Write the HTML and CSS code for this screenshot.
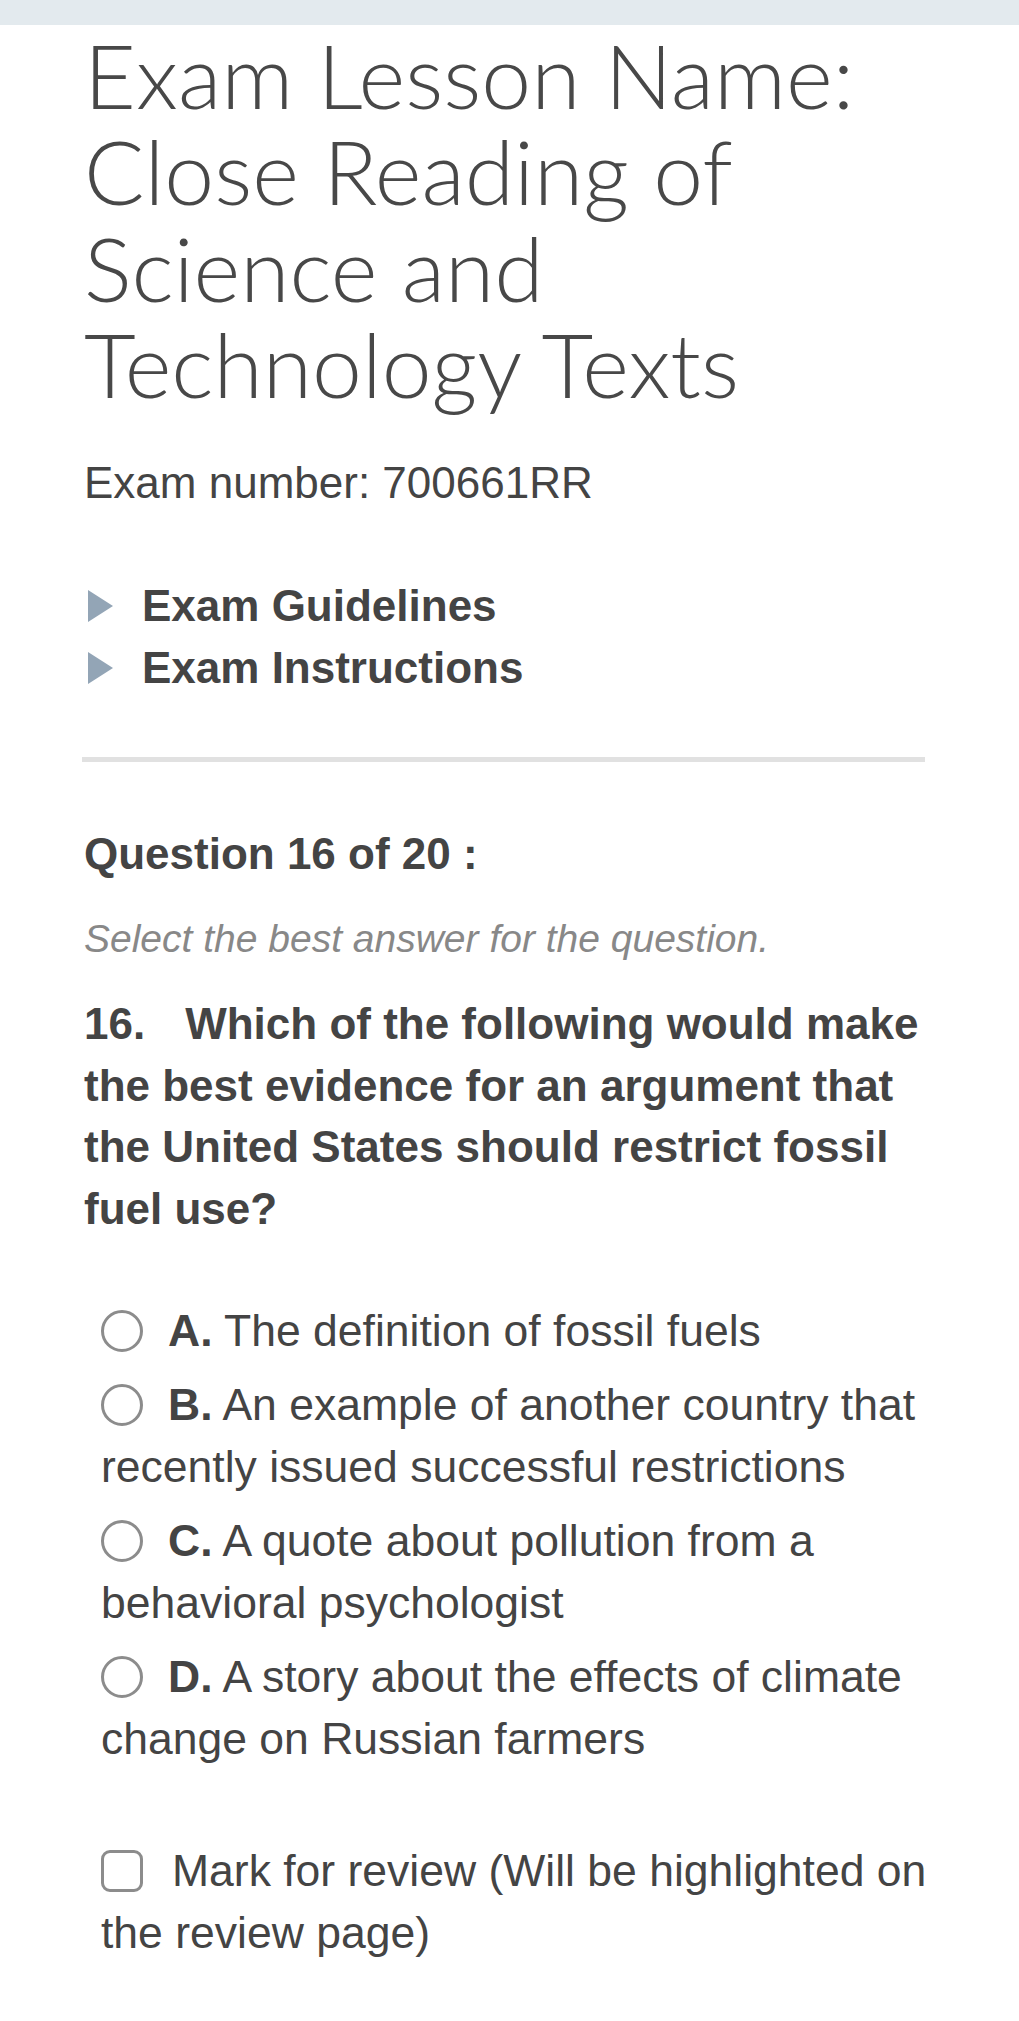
FILE: index.html
```html
<!DOCTYPE html>
<html lang="en">
<head>
  <meta charset="UTF-8">
  <title>Exam - Question 16</title>
  <link rel="stylesheet" href="styles.css">
</head>
<body>

<div class="top-bar"></div>

<div class="exam-container">
  <!-- Header -->
  <h1 class="lesson-title">Exam Lesson Name: Close Reading of Science and Technology Texts</h1>
  <p class="exam-number">Exam number: 700661RR</p>

  <ul class="toggle-list">
    <li class="toggle-item"><span class="arrow"></span>Exam Guidelines</li>
    <li class="toggle-item"><span class="arrow"></span>Exam Instructions</li>
  </ul>

  <hr class="divider">

  <!-- Question -->
  <h2 class="question-count">Question 16 of 20 :</h2>
  <p class="question-hint">Select the best answer for the question.</p>
  <p class="question-text"><span class="q-num">16.</span>Which of the following would make the best evidence for an argument that the United States should restrict fossil fuel use?</p>

  <div class="answers">
    <label class="answer"><input type="radio" name="q16" value="A"><strong>A.</strong> The definition of fossil fuels</label>
    <label class="answer"><input type="radio" name="q16" value="B"><strong>B.</strong> An example of another country that recently issued successful restrictions</label>
    <label class="answer"><input type="radio" name="q16" value="C"><strong>C.</strong> A quote about pollution from a behavioral psychologist</label>
    <label class="answer"><input type="radio" name="q16" value="D"><strong>D.</strong> A story about the effects of climate change on Russian farmers</label>
  </div>

  <label class="review"><input type="checkbox" id="markReview">Mark for review (Will be highlighted on the review page)</label>
</div>

</body>
</html>
```

FILE: styles.css
```css
* { box-sizing: border-box; }

body {
  margin: 0;
  background: #fff;
  font-family: "Liberation Sans", Arial, sans-serif;
  color: #444;
}

.top-bar {
  height: 25px;
  background: #e3eaee;
}

.exam-container {
  padding: 0 84px 60px 84px;
}

.lesson-title {
  font-family: Lato, "Open Sans", sans-serif;
  font-weight: 300;
  font-size: 89.5px;
  line-height: 96.3px;
  color: #484848;
  margin: 2px 0 0;
  padding-right: 60px;
}

.exam-number {
  font-size: 44px;
  line-height: 60px;
  margin: 41px 0 0;
}

.toggle-list {
  list-style: none;
  margin: 62px 0 0;
  padding: 0;
}

.toggle-item {
  display: flex;
  align-items: center;
  font-size: 44px;
  font-weight: bold;
  line-height: 62px;
  color: #444;
}

.arrow {
  width: 0;
  height: 0;
  margin: 0 29px 0 4px;
  border-top: 16.5px solid transparent;
  border-bottom: 16.5px solid transparent;
  border-left: 25px solid #93a5b6;
}

.divider {
  border: none;
  height: 5px;
  background: #e1e1e1;
  margin: 58px 10px 0 -2px;
}

.question-count {
  font-size: 44px;
  line-height: 60px;
  margin: 62px 0 0;
}

.question-hint {
  font-size: 39px;
  font-style: italic;
  line-height: 54px;
  color: #888;
  margin: 28px 0 0;
}

.question-text {
  font-size: 44px;
  font-weight: bold;
  line-height: 61.5px;
  margin: 27px 10px 0 0;
}

.q-num {
  margin-right: 40px;
}

.answers {
  margin: 61px 0 0;
  padding-left: 17px;
}

.answer {
  display: block;
  font-size: 44.5px;
  line-height: 62.5px;
  margin-bottom: 11px;
}

input[type="radio"],
input[type="checkbox"] {
  appearance: none;
  width: 42px;
  height: 42px;
  margin: 0 25px 0 0;
  border: 3px solid #8c8c8c;
  vertical-align: -6px;
  background: #fff;
}

input[type="radio"] {
  border-radius: 50%;
}

input[type="checkbox"] {
  border-radius: 9px;
  margin-right: 29px;
}

.review {
  display: block;
  font-size: 44.5px;
  line-height: 62px;
  margin: 69px 0 0;
  padding-left: 17px;
}
```
